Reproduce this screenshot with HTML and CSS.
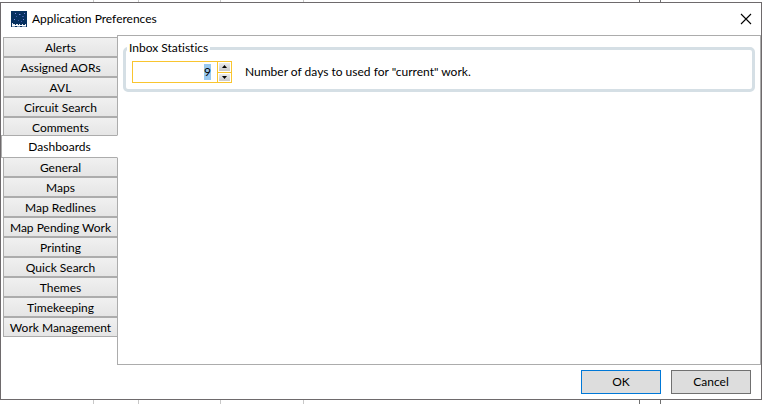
FILE: index.html
```html
<!DOCTYPE html>
<html lang="en">
<head>
<meta charset="utf-8">
<title>Application Preferences</title>
<link rel="stylesheet" href="styles.css">
</head>
<body>
<main class="window">
  <header class="titlebar">
    <svg class="app-icon" viewBox="0 0 16 16" shape-rendering="crispEdges" aria-hidden="true">
      <path fill="#06305f" d="M0 0h16v16H0z"/>
      <path fill="#7f86dc" d="M4 2h1v1H4zM13 2h1v1h-1zM8 3h1v1H8zM3 8h1v1H3zM12 8h1v1h-1z"/>
      <path fill="#3e55a5" d="M9 3h1v1H9zM5 5h1v1H5zM11 5h2v1h-2zM7 9h1v1H7zM10 10h1v1h-1z"/>
      <path fill="#e4e9f0" d="M1 12h1v1h2v1h1v-1h2v1h1v-1h1v1h2v-1h1v1h2v-1h1v2H1z"/>
      <path fill="#fff" d="M1 14h14v1H1z"/>
      <path fill="#8ea3bd" d="M1 15h3v1H1zM6 15h3v1H6zM11 15h4v1h-4z"/>
    </svg>
    <h1 class="title">Application Preferences</h1>
    <button class="close" type="button" aria-label="Close">
      <svg viewBox="0 0 10 10" aria-hidden="true"><path d="M0 0l10 10M10 0L0 10" stroke="#000" stroke-width="1.1"/></svg>
    </button>
  </header>
  <div class="content">
    <nav class="tabs" role="tablist" aria-label="Categories">
      <button class="tab" type="button" role="tab">Alerts</button>
      <button class="tab" type="button" role="tab">Assigned AORs</button>
      <button class="tab" type="button" role="tab">AVL</button>
      <button class="tab" type="button" role="tab">Circuit Search</button>
      <button class="tab" type="button" role="tab">Comments</button>
      <button class="tab selected" type="button" role="tab" aria-selected="true">Dashboards</button>
      <button class="tab" type="button" role="tab">General</button>
      <button class="tab" type="button" role="tab">Maps</button>
      <button class="tab" type="button" role="tab">Map Redlines</button>
      <button class="tab" type="button" role="tab">Map Pending Work</button>
      <button class="tab" type="button" role="tab">Printing</button>
      <button class="tab" type="button" role="tab">Quick Search</button>
      <button class="tab" type="button" role="tab">Themes</button>
      <button class="tab" type="button" role="tab">Timekeeping</button>
      <button class="tab" type="button" role="tab">Work Management</button>
    </nav>
    <section class="panel" role="tabpanel" aria-label="Dashboards">
      <fieldset class="group">
        <legend>Inbox Statistics</legend>
        <div class="row">
          <div class="spinner">
            <div class="value-box"><input class="value" id="days" type="text" inputmode="numeric" value="9" size="1"></div>
            <div class="arrows">
              <button class="arrow" type="button" aria-label="Increase"><svg viewBox="0 0 5 3" aria-hidden="true"><path d="M0 3L2.500 0L5 3z"/></svg></button>
              <button class="arrow" type="button" aria-label="Decrease"><svg viewBox="0 0 5 3" aria-hidden="true"><path d="M0 0h5L2.500 3z"/></svg></button>
            </div>
          </div>
          <label for="days">Number of days to used for "current" work.</label>
        </div>
      </fieldset>
    </section>
  </div>
  <footer class="actions">
    <button class="action primary" type="button">OK</button>
    <button class="action" type="button">Cancel</button>
  </footer>
</main>
</body>
</html>
```
FILE: styles.css
```css
* { box-sizing: border-box; }

body {
  margin: 0;
  min-height: 100vh;
  padding: 2px 3px 4px 0;
  display: flex;
  font: 12px/16px Lato, "Open Sans", sans-serif;
  font-variant-ligatures: none;
  color: #000;
  background:
    linear-gradient(#c8c8c8, #c8c8c8) 93px 0 / 1px 100% no-repeat,
    linear-gradient(#c8c8c8, #c8c8c8) 138px 0 / 1px 100% no-repeat,
    linear-gradient(#c8c8c8, #c8c8c8) 220px 0 / 1px 100% no-repeat,
    linear-gradient(#c8c8c8, #c8c8c8) 303px 0 / 1px 100% no-repeat,
    linear-gradient(#707070, #707070) 639px 0 / 1px 100% no-repeat,
    linear-gradient(#707070, #707070) 660px 0 / 1px 100% no-repeat,
    #fff;
}

button, input { font: inherit; font-variant-ligatures: none; color: inherit; }

.window {
  flex: 1;
  display: flex;
  flex-direction: column;
  background: #fff;
  border: 1px solid #6e6a6c;
}

.titlebar {
  height: 32px;
  display: flex;
  align-items: center;
  padding: 0 10px;
}

.app-icon { width: 16px; height: 16px; margin-right: 5px; }

.title { margin: 0; flex: 1; font-size: 12px; font-weight: 400; }

.close {
  display: flex;
  padding: 0;
  border: 0;
  background: none;
}

.close svg { width: 10px; height: 10px; overflow: visible; }

.content { flex: 1; display: flex; }

.tabs {
  width: 117px;
  display: flex;
  flex-direction: column;
  padding: 2px 0 0 2px;
  margin-right: -1px;
  position: relative;
}

.tab {
  height: 20px;
  padding: 1px 0 0;
  line-height: 16px;
  white-space: nowrap;
  border: 1px solid #acacac;
  background: linear-gradient(#f0f0f0, #e5e5e5);
}

.tab.selected {
  height: 23px;
  margin: -2px 0 -1px -2px;
  z-index: 1;
  border-right-color: #fff;
  background: #fff;
}

.panel {
  flex: 1;
  border: 1px solid #acacac;
  padding: 4px 5px;
}

.group {
  margin: 0;
  padding: 5px 6px 6px;
  border: 3px solid #d5dfe5;
  border-radius: 5px;
}

.group legend {
  margin-left: -5px;
  padding: 0 2px;
  line-height: 16px;
}

.row { display: flex; align-items: center; gap: 13px; }

.spinner {
  width: 100px;
  height: 22px;
  display: flex;
  border: 1px solid #f9c52f;
}

.value-box {
  flex: 1;
  display: flex;
  justify-content: flex-end;
  align-items: center;
  padding-right: 6px;
}

.value {
  width: 7px;
  height: 16px;
  padding: 0;
  border: 0;
  background: #99c9ef;
  text-align: right;
}

.arrows {
  width: 14px;
  display: flex;
  flex-direction: column;
  border-left: 1px solid #f9c52f;
}

.arrow {
  flex: 1;
  display: flex;
  align-items: center;
  justify-content: center;
  padding: 0;
  border: 0 solid #f9c52f;
  box-shadow: inset 0 0 0 1px #fff;
  background: linear-gradient(#f0f0f0, #c4c4c4);
}

.arrow + .arrow { border-top-width: 1px; }

.arrow svg { width: 5px; height: 3px; }

.actions {
  display: flex;
  justify-content: flex-end;
  gap: 10px;
  padding: 5px 10px;
}

.action {
  width: 80px;
  height: 24px;
  padding: 0;
  border: 1px solid #707070;
  background: #ddd;
}

.action.primary { border-color: #0078d7; }
```
